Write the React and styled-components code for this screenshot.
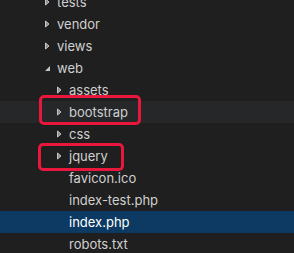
import React from "react";
import styled, { createGlobalStyle } from "styled-components";

const GlobalStyle = createGlobalStyle`
  html, body {
    margin: 0;
    padding: 0;
    background: #1f1f1f;
    overflow: hidden;
  }
`;

const Explorer = styled.div`
  font-family: Inter, "Noto Sans", sans-serif;
  font-size: 13px;
  color: #cccccc;
  width: 294px;
  height: 253px;
  overflow: hidden;
  background: #1f1f1f;
`;

const TreeList = styled.ul`
  list-style: none;
  margin: -9px 0 0 0;
  padding: 0;
`;

const Row = styled.li`
  position: relative;
  display: flex;
  align-items: center;
  height: 22px;
  padding-left: ${(p) => 44 + p.$depth * 12}px;
  background: ${(p) =>
    p.$selected ? "#0c3a62" : p.$hover ? "#252729" : "transparent"};
  color: ${(p) => (p.$selected ? "#ffffff" : "#d0d0d0")};
`;

const Twistie = styled.span`
  display: flex;
  align-items: center;
  width: 13px;
  height: 22px;
  flex-shrink: 0;
`;

const Label = styled.span`
  line-height: 22px;
  white-space: nowrap;
`;

const Marker = styled.span`
  position: absolute;
  left: ${(p) => p.$left}px;
  top: ${(p) => p.$top}px;
  width: ${(p) => p.$width}px;
  height: ${(p) => p.$height}px;
  border: 3px solid #e8173b;
  border-radius: 5px;
  box-sizing: border-box;
  pointer-events: none;
`;

const Arrow = ({ open }) =>
  open ? (
    <svg width="7" height="7" viewBox="0 0 7 7">
      <path d="M6 1 L6 6 L1 6 Z" fill="#c5c5c5" />
    </svg>
  ) : (
    <svg width="6" height="8" viewBox="0 0 6 8">
      <path d="M1.5 1 L5 4 L1.5 7 Z" fill="#8a8a8a" stroke="#c5c5c5" strokeWidth="1" />
    </svg>
  );

const items = [
  { name: "tests", depth: 0, folder: true },
  { name: "vendor", depth: 0, folder: true },
  { name: "views", depth: 0, folder: true },
  { name: "web", depth: 0, folder: true, open: true },
  { name: "assets", depth: 1, folder: true },
  {
    name: "bootstrap",
    depth: 1,
    folder: true,
    hover: true,
    marker: { left: 39, top: -6, width: 102, height: 30 },
  },
  { name: "css", depth: 1, folder: true },
  {
    name: "jquery",
    depth: 1,
    folder: true,
    marker: { left: 38, top: -2, width: 86, height: 28 },
  },
  { name: "favicon.ico", depth: 1 },
  { name: "index-test.php", depth: 1 },
  { name: "index.php", depth: 1, selected: true },
  { name: "robots.txt", depth: 1 },
];

const App = () => {
  return (
    <>
      <GlobalStyle />
      <Explorer>
        <TreeList>
          {items.map((item) => (
            <Row
              key={item.name}
              $depth={item.depth}
              $selected={item.selected}
              $hover={item.hover}
            >
              <Twistie>{item.folder && <Arrow open={item.open} />}</Twistie>
              <Label>{item.name}</Label>
              {item.marker && (
                <Marker
                  $left={item.marker.left}
                  $top={item.marker.top}
                  $width={item.marker.width}
                  $height={item.marker.height}
                />
              )}
            </Row>
          ))}
        </TreeList>
      </Explorer>
    </>
  );
};

export default App;
